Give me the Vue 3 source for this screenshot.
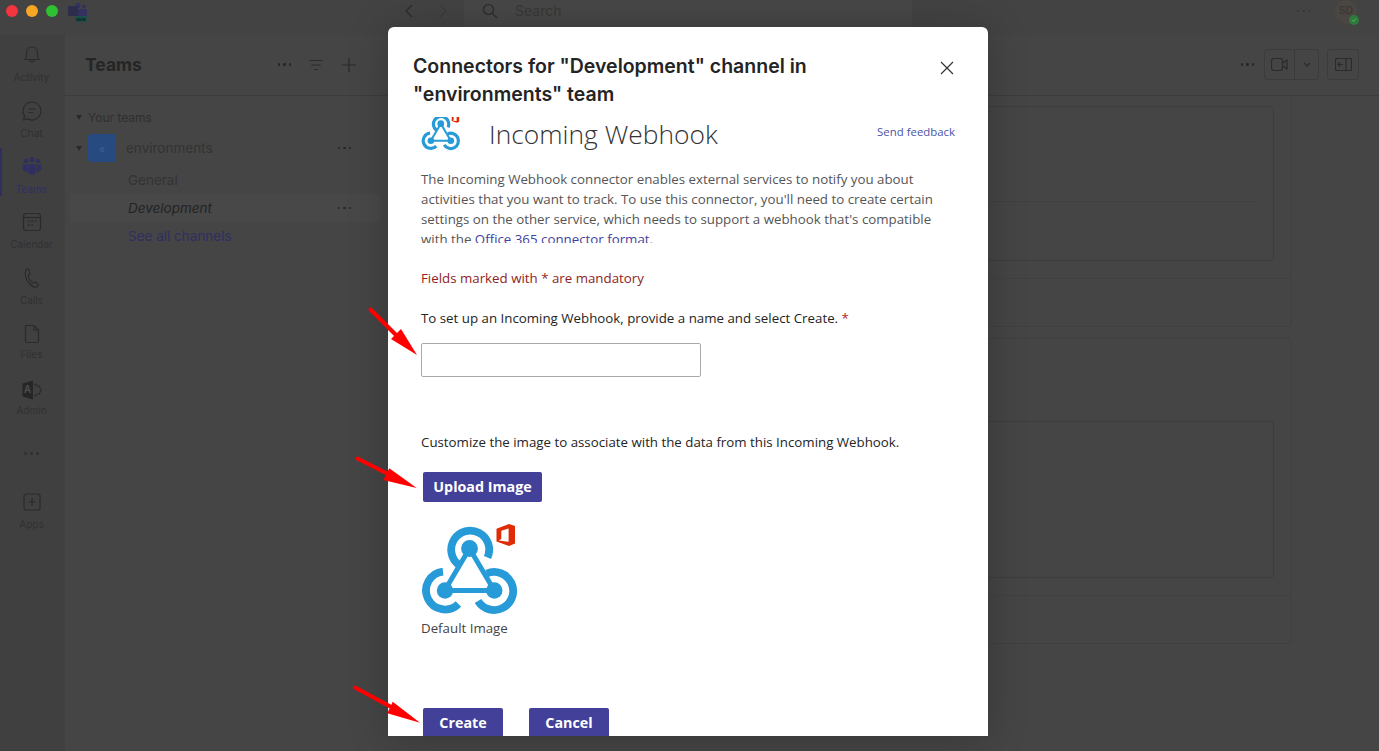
<script setup>
const railItems = [
  { name: 'Activity', icon: 'bell' },
  { name: 'Chat', icon: 'chat' },
  { name: 'Teams', icon: 'teams', active: true },
  { name: 'Calendar', icon: 'calendar' },
  { name: 'Calls', icon: 'phone' },
  { name: 'Files', icon: 'file', tight: true },
  { name: 'Admin', icon: 'admin', tight: true },
];
</script>

<template>
  <div class="app">
    <svg width="0" height="0" class="defs">
      <symbol id="webhook" viewBox="420 522 98 94">
        <g fill="none" stroke="#279bd8" stroke-width="7.8">
          <path d="M486.5 557.5 A19 19 0 1 0 458 565" />
          <path d="M442 571.6 A19 19 0 1 0 457.4 604" />
          <path d="M485.8 573.5 A19 19 0 1 1 477 601" />
        </g>
        <g stroke="#279bd8" stroke-width="5">
          <line x1="468.5" y1="548.5" x2="444" y2="590" />
          <line x1="468.5" y1="548.5" x2="493" y2="590" />
          <line x1="444" y1="590.5" x2="493" y2="590.5" />
        </g>
        <g fill="#279bd8">
          <circle cx="468.5" cy="548.5" r="8.4" />
          <circle cx="444" cy="590.5" r="8.2" />
          <circle cx="493.3" cy="590.5" r="8.2" />
        </g>
        <path fill="#e02b07" fill-rule="evenodd" d="M495.5 528.8 L508 524 L514 526 L514 543.5 L508 546 L495.5 541.5 Z M500.3 530.8 L507.6 528.6 V541.8 L497.5 540.4 L500.3 539 Z" />
      </symbol>
    </svg>

    <header class="titlebar">
      <div class="lights">
        <span class="light red"></span>
        <span class="light amber"></span>
        <span class="light green"></span>
      </div>
      <svg class="app-logo" width="22" height="20" viewBox="0 0 22 20">
        <circle cx="11" cy="3.5" r="2.6" fill="#33325f" />
        <circle cx="17" cy="4.5" r="1.9" fill="#33325f" />
        <rect x="8" y="7" width="12" height="9" rx="1" fill="#33325f" />
        <rect x="1" y="4" width="10" height="10" rx="1" fill="#2d2c4c" />
        <rect x="8" y="14" width="12" height="6" fill="#1c4f4a" />
        <text x="14" y="19" text-anchor="middle" class="new-text">NEW</text>
      </svg>
      <div class="history">
        <svg width="12" height="14" viewBox="0 0 12 14"><path d="M9 1 L3 7 L9 13" class="line" /></svg>
        <svg width="12" height="14" viewBox="0 0 12 14" class="faint"><path d="M3 1 L9 7 L3 13" class="line" /></svg>
      </div>
      <div class="search">
        <svg width="16" height="16" viewBox="0 0 16 16"><circle cx="6.5" cy="6.5" r="5" class="line" /><path d="M10.2 10.2 L15 15" class="line" /></svg>
        <span>Search</span>
      </div>
      <div class="account">
        <span class="dots faint-dots"><i></i><i></i><i></i></span>
        <div class="avatar">
          SD
          <span class="status">
            <svg width="6" height="6" viewBox="0 0 6 6"><path d="M1 3 L2.5 4.5 L5 1.5" fill="none" stroke="#6fae78" stroke-width="0.9" /></svg>
          </span>
        </div>
      </div>
    </header>

    <div class="workspace">
      <nav class="rail">
        <div v-for="item in railItems" :key="item.name" class="rail-item" :class="{ active: item.active, tight: item.tight }">
          <svg width="20" height="20" viewBox="0 0 20 20" class="rail-icon">
            <g v-if="item.icon === 'bell'">
              <path d="M3 14.5 C4.5 13 4.5 11 4.5 8 C4.5 4.5 6.8 2 10 2 C13.2 2 15.5 4.5 15.5 8 C15.5 11 15.5 13 17 14.5 Z" class="line" />
              <path d="M8 15 C8 17.5 12 17.5 12 15" class="line" />
            </g>
            <g v-else-if="item.icon === 'chat'">
              <path d="M10 1 A9 9 0 1 1 5.6 17.9 L1.5 19 L2.6 15 A9 9 0 0 1 10 1 Z" class="line" />
              <path d="M6.5 8 H13.5 M6.5 11.5 H11.5" class="line" />
            </g>
            <g v-else-if="item.icon === 'teams'" fill="#2f2f60">
              <circle cx="10" cy="2.8" r="2.6" />
              <circle cx="4" cy="4" r="2.2" />
              <circle cx="16" cy="4" r="2.2" />
              <path d="M0.5 7.5 H5 V13 L5.5 15 C2.5 15 0.5 13 0.5 10 Z" />
              <path d="M19.5 7.5 H15 V13 L14.5 15 C17.5 15 19.5 13 19.5 10 Z" />
              <path d="M5.7 7 H14.3 V13 C14.3 15.5 12.5 18 10 18 C7.5 18 5.7 15.5 5.7 13 Z" />
            </g>
            <g v-else-if="item.icon === 'calendar'">
              <rect x="1.5" y="1.5" width="17" height="17" rx="2.5" class="line" />
              <path d="M1.5 5.5 H18.5" class="line" />
              <path d="M6 9 H7.4 M9.4 9 H10.8 M12.8 9 H14.2 M6 13 H7.4 M9.4 13 H10.8" class="line thick" />
            </g>
            <g v-else-if="item.icon === 'phone'">
              <path d="M4 1.5 L6.5 1 L8 6 L6.3 7.5 C6.5 10.5 8.5 13.5 11 15 L13.5 14 L16.5 17 L15 19 C13 19.6 10 18.5 7.5 15.5 C4 11.5 2.5 6 4 1.5 Z" class="line" />
            </g>
            <g v-else-if="item.icon === 'file'">
              <path d="M4 1.5 H12 L16.5 6 V17 C16.5 18 15.8 18.5 15 18.5 H5 C4.2 18.5 3.5 18 3.5 17 V2.5 C3.5 2 3.7 1.5 4 1.5 Z" class="line" />
              <path d="M12 1.5 V6 H16.5" class="line" />
            </g>
            <g v-else-if="item.icon === 'admin'">
              <path d="M0.5 3.5 L11 0.5 V19.5 L0.5 16.5 Z" fill="#262626" />
              <text x="5.6" y="13" text-anchor="middle" class="admin-a">A</text>
              <path d="M12 5 L14 4 L15 6 L17.5 6 L18 8 L19.5 10 L18 12 L17.5 14 L15 14 L14 16 L12 15" class="line" />
            </g>
          </svg>
          <span class="rail-label">{{ item.name }}</span>
        </div>
        <div class="rail-more"><i></i><i></i><i></i></div>
        <div class="rail-item apps">
          <svg width="20" height="20" viewBox="0 0 20 20" class="rail-icon">
            <rect x="2" y="2" width="16" height="16" rx="2" class="line" />
            <path d="M10 6 V14 M6 10 H14" class="line" />
          </svg>
          <span class="rail-label">Apps</span>
        </div>
      </nav>

      <aside class="panel">
        <div class="panel-head">
          <h2>Teams</h2>
          <div class="panel-tools">
            <span class="dots"><i></i><i></i><i></i></span>
            <svg width="16" height="12" viewBox="0 0 16 12"><path d="M1 1.5 H15 M3.5 6 H12.5 M6 10.5 H10" class="line" /></svg>
            <svg width="16" height="16" viewBox="0 0 16 16"><path d="M8 1 V15 M1 8 H15" class="line" /></svg>
          </div>
        </div>
        <div class="your-teams"><span class="caret"></span>Your teams</div>
        <div class="team-row">
          <span class="caret"></span>
          <span class="team-avatar">e</span>
          <span class="team-name">environments</span>
          <span class="dots"><i></i><i></i><i></i></span>
        </div>
        <div class="channel">General</div>
        <div class="channel current">
          <em>Development</em>
          <span class="dots"><i></i><i></i><i></i></span>
        </div>
        <div class="channel link">See all channels</div>
      </aside>

      <main class="main">
        <div class="main-head">
          <span class="dots"><i></i><i></i><i></i></span>
          <div class="btn-group">
            <span class="video">
              <svg width="17" height="13" viewBox="0 0 17 13"><rect x="0.5" y="0.5" width="11" height="12" rx="2.5" class="line" /><path d="M12 5 L16 2 V11 L12 8" class="line" /></svg>
            </span>
            <span class="chev">
              <svg width="8" height="5" viewBox="0 0 8 5"><path d="M1 1 L4 4 L7 1" class="line" /></svg>
            </span>
          </div>
          <div class="btn-single">
            <svg width="17" height="13" viewBox="0 0 17 13"><rect x="0.5" y="0.5" width="16" height="12" rx="1.5" class="line" /><path d="M11 0.5 V12.5 M8 6.5 H3 M5 4.5 L3 6.5 L5 8.5" class="line" /></svg>
          </div>
        </div>
        <div class="feed">
          <section class="post">
            <div class="post-body first">
              <div class="inner"><div class="inner-line"></div></div>
            </div>
            <div class="post-foot"></div>
          </section>
          <section class="post">
            <div class="post-body second">
              <div class="inner tall"></div>
            </div>
            <div class="post-foot"></div>
          </section>
        </div>
      </main>
    </div>

    <div class="modal">
      <div class="modal-head">
        <h1>Connectors for "Development" channel in "environments" team</h1>
        <svg class="close" width="14" height="14" viewBox="0 0 14 14"><path d="M1 1 L13 13 M13 1 L1 13" fill="none" stroke="#333" stroke-width="1.2" /></svg>
      </div>

      <div class="scroller">
        <div class="connector-head">
          <svg class="small-logo" width="40" height="38"><use href="#webhook" /></svg>
          <span class="connector-name">Incoming Webhook</span>
          <a class="feedback">Send feedback</a>
        </div>
        <p class="intro">
          The Incoming Webhook connector enables external services to notify you about
          activities that you want to track. To use this connector, you'll need to create certain
          settings on the other service, which needs to support a webhook that's compatible
          with the <a>Office 365 connector format</a>.
        </p>
      </div>

      <div class="form">
        <p class="mandatory">Fields marked with * are mandatory</p>
        <label class="label name-label">To set up an Incoming Webhook, provide a name and select Create. <span class="star">*</span></label>
        <input class="name-input" type="text" />
        <p class="label customize">Customize the image to associate with the data from this Incoming Webhook.</p>
        <button class="btn upload">Upload Image</button>
        <svg class="big-logo" width="98" height="94"><use href="#webhook" /></svg>
        <p class="default-label">Default Image</p>
        <div class="actions">
          <button class="btn action">Create</button>
          <button class="btn action">Cancel</button>
        </div>
      </div>
    </div>

    <!-- arrows drawn on top of the screenshot -->
    <svg class="arrows" width="1379" height="751" viewBox="0 0 1379 751">
      <g stroke="#ff0000" stroke-width="4" stroke-linecap="round">
        <line x1="370.5" y1="309.5" x2="398" y2="337" />
        <line x1="357.5" y1="458.5" x2="390" y2="475" />
        <line x1="355" y1="687.5" x2="393" y2="708" />
      </g>
      <g fill="#ff0000">
        <polygon points="417,355 401,329 391,339" />
        <polygon points="416.7,488 389.3,468.3 383.3,480" />
        <polygon points="420,722.7 392.7,701.7 387.3,713.3" />
      </g>
    </svg>
  </div>
</template>

<style>
html, body {
  margin: 0;
  background: #444;
}
</style>

<style scoped>
.app {
  position: relative;
  width: 1379px;
  height: 751px;
  overflow: hidden;
  background: #454545;
  font-family: Inter, "Noto Sans", sans-serif;
  display: flex;
  flex-direction: column;
  color: #2c2c2c;
}
.defs {
  position: absolute;
}
.line {
  fill: none;
  stroke: #2b2b2b;
  stroke-width: 1.2;
}
.line.thick {
  stroke-width: 1.8;
}
.new-text {
  font-size: 4px;
  font-weight: 700;
  fill: #0d1f1e;
}
.admin-a {
  font-size: 10px;
  font-weight: 700;
  fill: #4a4a4a;
}

/* title bar */
.titlebar {
  height: 35px;
  flex: none;
  display: flex;
  align-items: flex-start;
  background: #434343;
  position: relative;
}
.lights {
  display: flex;
  gap: 8px;
  padding: 5px 0 0 6px;
}
.light {
  width: 12px;
  height: 12px;
  border-radius: 50%;
}
.red { background: #f4353f; }
.amber { background: #f5a623; }
.green { background: #2fc132; }
.app-logo {
  margin: 2px 0 0 9px;
}
.history {
  display: flex;
  gap: 22px;
  margin: 4px 0 0 314px;
  width: 59px;
}
.history .faint { opacity: 0.35; }
.search {
  width: 448px;
  height: 35px;
  background: #474747;
  display: flex;
  gap: 17px;
  padding-left: 18px;
  box-sizing: border-box;
  padding-top: 3px;
  font-size: 14px;
  line-height: 16px;
  color: #383838;
  margin-left: 2px;
}
.account {
  margin-left: auto;
  display: flex;
  gap: 25px;
  padding: 0 22px 0 0;
}
.account .dots {
  margin-top: 10px;
}
.dots {
  display: inline-flex;
  gap: 3px;
}
.dots i {
  width: 2.4px;
  height: 2.4px;
  border-radius: 50%;
  background: #262626;
}
.faint-dots i { background: #383838; }
.avatar {
  position: relative;
  width: 22px;
  height: 24px;
  border-radius: 50%;
  background: #4a4641;
  text-align: center;
  font-size: 10.5px;
  line-height: 22px;
  color: #3a3430;
}
.status {
  position: absolute;
  left: 14px;
  top: 15px;
  width: 10px;
  height: 10px;
  border-radius: 50%;
  background: #2e7a3a;
  display: flex;
  align-items: center;
  justify-content: center;
}

.workspace {
  flex: 1;
  display: flex;
  min-height: 0;
}

/* left rail */
.rail {
  width: 65px;
  flex: none;
  background: #404040;
  padding-top: 6px;
  box-sizing: border-box;
}
.rail-item {
  height: 55.8px;
  box-sizing: border-box;
  padding-top: 4px;
  display: flex;
  flex-direction: column;
  align-items: center;
  gap: 5px;
  position: relative;
  width: 63px;
}
.rail-item.tight {
  gap: 3px;
}
.rail-item.active::before {
  content: "";
  position: absolute;
  left: 0;
  top: -5px;
  width: 2px;
  height: 48px;
  background: #2f2f60;
}
.rail-item.active .rail-label {
  color: #2f2f60;
}
.rail-label {
  font-size: 10px;
  line-height: 14px;
  color: #303030;
}
.rail-more {
  height: 43px;
  width: 63px;
  display: flex;
  align-items: center;
  justify-content: center;
  gap: 3px;
}
.rail-more i {
  width: 3px;
  height: 3px;
  border-radius: 50%;
  background: #303030;
}
.apps {
  margin-top: 13.4px;
}

/* teams panel */
.panel {
  width: 315px;
  flex: none;
  background: #454545;
}
.panel-head {
  height: 61px;
  box-sizing: border-box;
  border-bottom: 1px solid #3d3d3d;
  display: flex;
  align-items: center;
  padding: 0 24px 1px 20px;
}
.panel-head h2 {
  margin: 0;
  font-size: 17.5px;
  font-weight: 700;
  color: #252525;
}
.panel-tools {
  display: flex;
  align-items: center;
  gap: 17px;
  margin-left: 136px;
}
.your-teams {
  display: flex;
  align-items: center;
  height: 20px;
  margin-top: 11px;
  padding-left: 11px;
  font-size: 12px;
  color: #2f2f2f;
}
.caret {
  width: 0;
  height: 0;
  border-left: 3.5px solid transparent;
  border-right: 3.5px solid transparent;
  border-top: 5px solid #2a2a2a;
  margin-right: 6px;
}
.team-row {
  display: flex;
  align-items: center;
  height: 28px;
  margin-top: 7px;
  padding-left: 11px;
  font-size: 13.5px;
  color: #333;
}
.team-avatar {
  width: 28px;
  height: 28px;
  margin-right: 10px;
  border-radius: 3px;
  background: #274a80;
  color: #3f5f94;
  font-size: 9px;
  display: flex;
  align-items: center;
  justify-content: center;
  flex: none;
}
.team-name {
  flex: 1;
}
.team-row .dots {
  margin-right: 29px;
}
.channel {
  height: 28px;
  display: flex;
  align-items: center;
  padding-left: 63px;
  font-size: 13.5px;
  color: #333;
}
.team-row + .channel {
  margin-top: 4px;
}
.channel.current {
  margin-left: 5px;
  padding-left: 58px;
  background: #484848;
  color: #232323;
  justify-content: space-between;
  padding-right: 29px;
  width: 310px;
  box-sizing: border-box;
}
.channel.link {
  color: #2f2f60;
}

/* channel area behind the dialog */
.main {
  flex: 1;
  display: flex;
  flex-direction: column;
  min-width: 0;
}
.main-head {
  height: 61px;
  flex: none;
  box-sizing: border-box;
  border-bottom: 1px solid #3d3d3d;
  display: flex;
  align-items: center;
  justify-content: flex-end;
  padding: 0 20px 1px 0;
}
.main-head > .dots {
  margin-right: 10px;
}
.btn-group,
.btn-single {
  height: 31px;
  box-sizing: border-box;
  border: 1px solid #3c3c3c;
  border-radius: 3px;
  display: flex;
  align-items: center;
}
.video {
  width: 29px;
  height: 100%;
  display: flex;
  align-items: center;
  justify-content: center;
  border-right: 1px solid #3a3a3a;
}
.chev {
  width: 23px;
  display: flex;
  justify-content: center;
}
.btn-single {
  width: 32px;
  margin-left: 8px;
  justify-content: center;
}
.feed {
  padding: 0 87px 0 10px;
  display: flex;
  flex-direction: column;
  gap: 11px;
}
.post {
  border: solid #404040;
  border-width: 0 1px 1px 1px;
  border-radius: 0 0 4px 4px;
}
.post + .post {
  border-top-width: 1px;
  border-radius: 4px;
}
.post-body.first {
  height: 183px;
  box-sizing: border-box;
  padding: 10px 17px 0 0;
  border-bottom: 1px solid #414141;
}
.post-body.second {
  height: 257px;
  box-sizing: border-box;
  padding: 82px 17px 0 0;
  border-bottom: 1px solid #414141;
}
.post-foot {
  height: 47px;
}
.inner {
  height: 155px;
  box-sizing: border-box;
  border: 1px solid #3d3d3d;
  border-radius: 3px;
  padding-top: 94px;
}
.inner.tall {
  height: 157px;
}
.inner-line {
  height: 1px;
  background: #404040;
  margin-right: 15px;
}

/* dialog */
.modal {
  position: absolute;
  left: 388px;
  top: 27px;
  width: 600px;
  height: 709px;
  background: #fff;
  border-radius: 6px 6px 0 0;
  overflow: hidden;
  box-shadow: 0 2px 40px rgba(0, 0, 0, 0.22);
  font-family: "Open Sans", "Noto Sans", sans-serif;
  display: flex;
  flex-direction: column;
}
.modal-head {
  display: flex;
  justify-content: space-between;
  align-items: flex-start;
  height: 90px;
  box-sizing: border-box;
  padding: 25px 34px 0 25px;
  flex: none;
}
.modal-head h1 {
  margin: 0;
  width: 420px;
  font-family: Inter, sans-serif;
  font-size: 19.5px;
  font-weight: 600;
  line-height: 28px;
  color: #242424;
}
.close {
  margin-top: 9px;
}
.scroller {
  height: 126px;
  overflow: hidden;
  padding: 0 33px;
  flex: none;
}
.connector-head {
  display: flex;
  align-items: center;
  margin-top: -4px;
  height: 38px;
}
.small-logo {
  flex: none;
}
.connector-name {
  margin: 4px 0 0 28px;
  font-size: 26.4px;
  font-weight: 300;
  color: #333;
  flex: 1;
}
.feedback {
  font-size: 11.4px;
  color: #4b53a8;
  margin-bottom: 2px;
}
.intro {
  margin: 18px 0 0;
  font-size: 13.3px;
  line-height: 20px;
  color: #555;
}
.intro a {
  color: #3f3fa0;
}
.form {
  padding: 25px 33px 0;
  display: flex;
  flex-direction: column;
  align-items: flex-start;
}
.mandatory {
  margin: 0;
  font-size: 13.3px;
  line-height: 20px;
  color: #8f1d22;
}
.label {
  margin: 0;
  font-size: 13.3px;
  line-height: 20px;
  color: #242424;
}
.name-label {
  margin-top: 20px;
}
.star {
  color: #b3262c;
}
.name-input {
  width: 280px;
  height: 34px;
  margin-top: 15px;
  box-sizing: border-box;
  border: 1px solid #aaa;
  border-radius: 2px;
  background: #fff;
}
.customize {
  margin-top: 55px;
}
.btn {
  border: 0;
  border-radius: 2px;
  background: #424099;
  color: #fff;
  font-family: "Open Sans", sans-serif;
  font-size: 14.3px;
  font-weight: 700;
  padding: 0;
}
.upload {
  width: 119px;
  height: 30px;
  margin: 20px 0 0 2px;
  padding-bottom: 2px;
}
.big-logo {
  margin-top: 20px;
}
.default-label {
  margin: 2px 0 0;
  font-size: 13.3px;
  line-height: 20px;
  color: #444;
}
.actions {
  display: flex;
  gap: 26px;
  margin: 70px 0 0 2px;
}
.action {
  width: 80px;
  height: 40px;
  padding-bottom: 12px;
}
.arrows {
  position: absolute;
  left: 0;
  top: 0;
  pointer-events: none;
}
</style>
